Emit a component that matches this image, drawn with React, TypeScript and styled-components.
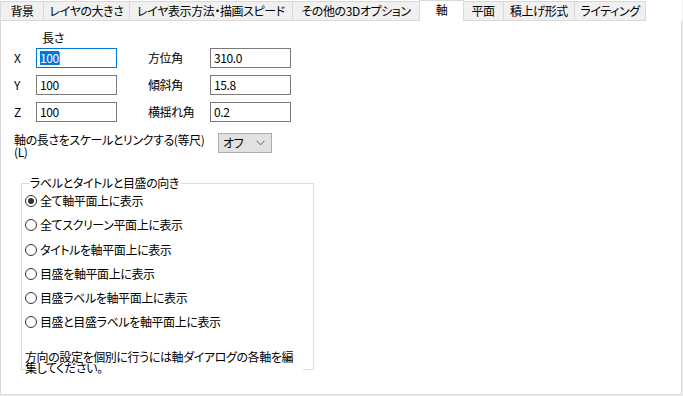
import styled, { createGlobalStyle } from "styled-components";

const GlobalStyle = createGlobalStyle`
  html, body {
    margin: 0;
    padding: 0;
    background: #f0f0f0;
  }
  body {
    font-family: "Noto Sans CJK JP", "Noto Sans", sans-serif;
    font-size: 12px;
    letter-spacing: -0.4px;
    color: #000;
    font-feature-settings: "palt";
  }
`;

const tabs = [
  { label: "背景", width: 44 },
  { label: "レイヤの大きさ", width: 86 },
  { label: "レイヤ表示方法・描画スピード", width: 163 },
  { label: "その他の3Dオプション", width: 127 },
  { label: "軸", width: 45, active: true },
  { label: "平面", width: 41 },
  { label: "積上げ形式", width: 71 },
  { label: "ライティング", width: 71 },
];

const radios = [
  "全て軸平面上に表示",
  "全てスクリーン平面上に表示",
  "タイトルを軸平面上に表示",
  "目盛を軸平面上に表示",
  "目盛ラベルを軸平面上に表示",
  "目盛と目盛ラベルを軸平面上に表示",
];

export default function App() {
  return (
    <>
      <GlobalStyle />
      <Dialog>
        <TabBar>
          {tabs.map((t) => (
            <Tab key={t.label} $width={t.width} $active={!!t.active}>
              {t.label}
            </Tab>
          ))}
        </TabBar>
        <Panel>
          <LengthTitle>長さ</LengthTitle>
          <FieldGrid>
            <Label>X</Label>
            <Field $focused>
              <Selected>100</Selected>
              <Caret />
            </Field>
            <Label>方位角</Label>
            <Field>310.0</Field>

            <Label>Y</Label>
            <Field>100</Field>
            <Label>傾斜角</Label>
            <Field>15.8</Field>

            <Label>Z</Label>
            <Field>100</Field>
            <Label>横揺れ角</Label>
            <Field>0.2</Field>
          </FieldGrid>

          <LinkRow>
            <LinkLabel>軸の長さをスケールとリンクする(等尺)(L)</LinkLabel>
            <Combo>
              <span>オフ</span>
              <svg width="9" height="6" viewBox="0 0 9 6">
                <path d="M0.5 0.8 L4.5 4.8 L8.5 0.8" fill="none" stroke="#606060" strokeWidth="1" />
              </svg>
            </Combo>
          </LinkRow>

          <Group>
            <Legend>ラベルとタイトルと目盛の向き</Legend>
            <RadioList>
              {radios.map((r, i) => (
                <RadioRow key={r}>
                  <RadioDot $checked={i === 0} />
                  <span>{r}</span>
                </RadioRow>
              ))}
            </RadioList>
            <Note>方向の設定を個別に行うには軸ダイアログの各軸を編集してください。</Note>
          </Group>
        </Panel>
      </Dialog>
    </>
  );
}

const Dialog = styled.div`
  width: 682px;
  height: 395px;
  display: flex;
  flex-direction: column;
  background: #fff;
`;

const TabBar = styled.div`
  display: flex;
  align-items: flex-end;
  height: 21px;
  margin-bottom: -1px;
  position: relative;
  z-index: 1;
  background: #fff;
`;

const Tab = styled.div<{ $width: number; $active: boolean }>`
  box-sizing: border-box;
  width: ${(p) => p.$width}px;
  height: ${(p) => (p.$active ? 21 : 20)}px;
  margin-left: ${(p) => (p.$active ? -1 : 0)}px;
  margin-right: ${(p) => (p.$active ? -1 : 0)}px;
  border: 1px solid #d9d9d9;
  border-left: ${(p) => (p.$active ? "1px solid #d9d9d9" : "none")};
  border-bottom: ${(p) => (p.$active ? "none" : "1px solid #d9d9d9")};
  background: ${(p) => (p.$active ? "#fff" : "#f0f0f0")};
  position: relative;
  z-index: ${(p) => (p.$active ? 2 : 0)};
  display: flex;
  align-items: ${(p) => (p.$active ? "flex-start" : "center")};
  padding-top: ${(p) => (p.$active ? 2 : 0)}px;
  justify-content: center;
  white-space: nowrap;
  line-height: 14px;

  &:first-child {
    border-left: 1px solid #d9d9d9;
  }
`;

const Panel = styled.div`
  flex: 1;
  border: 1px solid #d9d9d9;
  background: #fff;
  padding: 10px 0 0 13px;
  display: flex;
  flex-direction: column;
`;

const LengthTitle = styled.div`
  margin-left: 28px;
  line-height: 14px;
  height: 17px;
`;

const FieldGrid = styled.div`
  display: grid;
  grid-template-columns: 22px 112px 62px 81px;
  grid-auto-rows: 20px;
  row-gap: 7px;
  align-items: center;
`;

const Label = styled.div`
  line-height: 14px;
`;

const Field = styled.div<{ $focused?: boolean }>`
  box-sizing: border-box;
  width: 81px;
  height: 20px;
  border: 1px solid ${(p) => (p.$focused ? "#0078d7" : "#7a7a7a")};
  background: #fff;
  padding-left: 3px;
  display: flex;
  align-items: center;
  line-height: 14px;
`;

const Selected = styled.span`
  background: #0078d7;
  color: #fff;
`;

const Caret = styled.span`
  width: 1px;
  height: 13px;
  background: #e8731a;
`;

const LinkRow = styled.div`
  display: flex;
  align-items: flex-start;
  margin-top: 11px;
`;

const LinkLabel = styled.div`
  width: 200px;
  line-height: 12px;
  padding-top: 1px;
`;

const Combo = styled.div`
  box-sizing: border-box;
  margin-left: 4px;
  width: 54px;
  height: 20px;
  border: 1px solid #adadad;
  background: #e1e1e1;
  display: flex;
  align-items: center;
  justify-content: space-between;
  padding: 0 6px 0 4px;
  line-height: 14px;
`;

const Group = styled.fieldset`
  box-sizing: border-box;
  width: 293px;
  height: 194px;
  margin: 18px 0 0 7px;
  padding: 0 10px 0 3px;
  border: 1px solid #dcdcdc;
  min-width: 0;
`;

const Legend = styled.legend`
  padding: 0 2px 0 1px;
  margin-left: 4px;
  line-height: 14px;
  color: #000;
`;

const RadioList = styled.div`
  display: flex;
  flex-direction: column;
  gap: 10.3px;
  margin-top: 4px;
`;

const RadioRow = styled.div`
  display: flex;
  align-items: center;
  gap: 3px;
  line-height: 14px;
`;

const RadioDot = styled.span<{ $checked: boolean }>`
  box-sizing: border-box;
  width: 12px;
  height: 12px;
  border-radius: 50%;
  border: 1px solid #333;
  background: #fff;
  display: flex;
  align-items: center;
  justify-content: center;

  &::after {
    content: "";
    width: 6px;
    height: 6px;
    border-radius: 50%;
    background: ${(p) => (p.$checked ? "#333" : "transparent")};
  }
`;

const Note = styled.p`
  margin: 22px 0 0;
  line-height: 11px;
  background: #fff;
  position: relative;
  padding-right: 4px;
`;
